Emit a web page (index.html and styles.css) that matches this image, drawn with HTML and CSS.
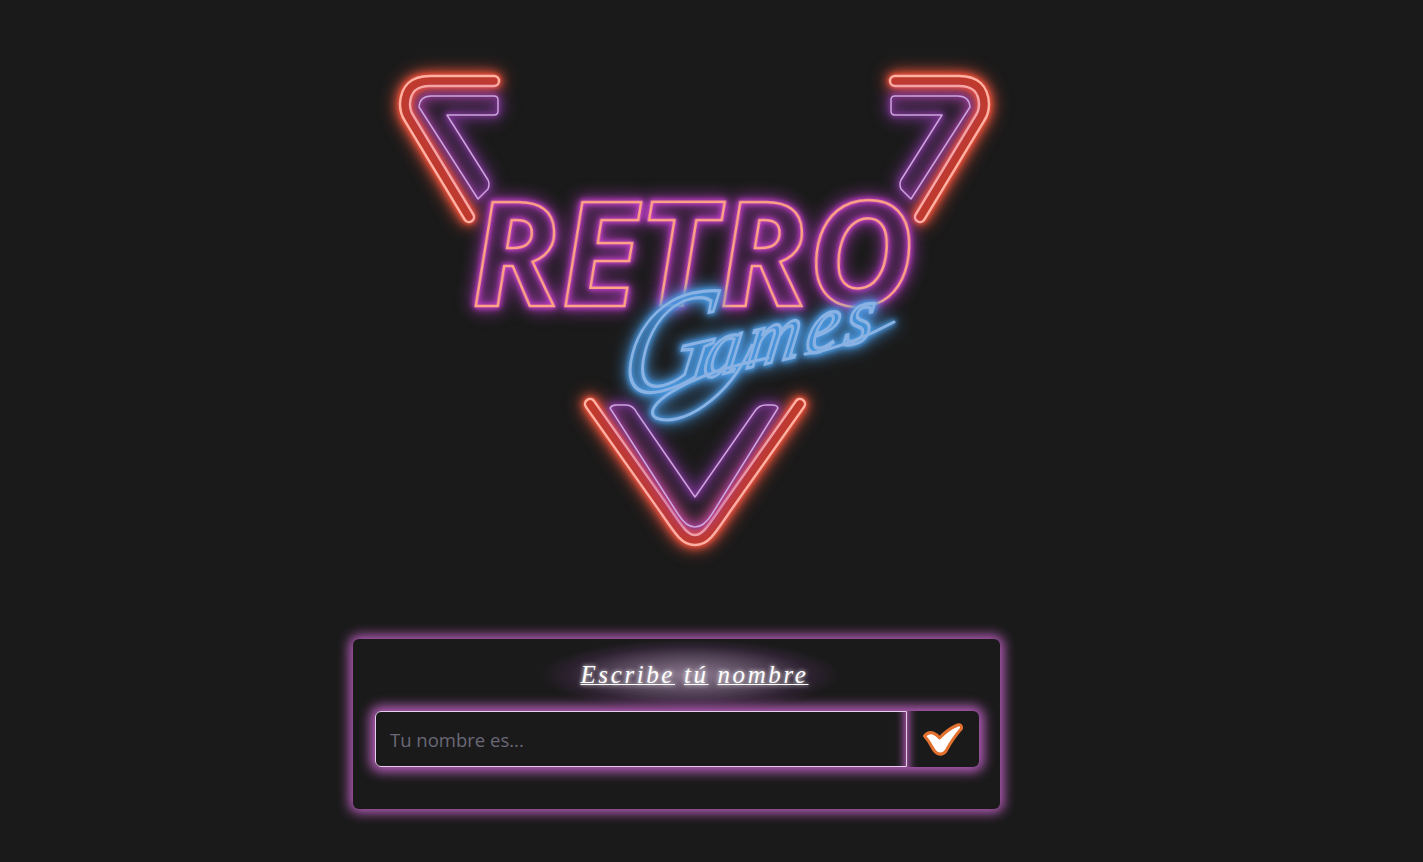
FILE: index.html
```html
<!DOCTYPE html>
<html lang="es">
<head>
    <meta charset="UTF-8">
    <title>Retro Games</title>
    <link rel="stylesheet" href="styles.css">
</head>
<body>

<div class="container">
    <!-- logo neon -->
    <svg class="logo" viewBox="365 55 660 530" role="img" aria-label="Retro Games">
        <defs>
            <path id="tube-corner" d="M494 81 H430 Q406 81 405 104 Q405 112 409 118 L469 217"/>
            <path id="tube-v" d="M590 404 L665 510 C680 532 685 540 695 540 C705 540 710 532 725 510 L800 404"/>
            <path id="shape-corner" d="M494 96 H431 Q420 96 419 107 L478 199 L488 189 Q490 184 488 180 L447 115 H494 Q498 115 498 111 V100 Q498 96 494 96 Z"/>
            <path id="shape-v" d="M610 408 Q612 405 616 405 H626 Q633 405 637 413 L695 497 L755 411 Q759 405 766 405 H772 Q777 405 778 408 L712 514 Q704 527 695 527 Q686 527 678 514 Z"/>
        </defs>

        <g class="glow-red">
            <use href="#tube-corner" class="tube-edge"/>
            <use href="#tube-corner" class="tube-core"/>
            <use href="#tube-v" class="tube-edge"/>
            <use href="#tube-v" class="tube-core"/>
            <g transform="translate(1389 0) scale(-1 1)">
                <use href="#tube-corner" class="tube-edge"/>
                <use href="#tube-corner" class="tube-core"/>
            </g>
        </g>
        <g class="glow-purple">
            <use href="#shape-corner" class="shape"/>
            <use href="#shape-v" class="shape"/>
            <use href="#shape-corner" class="shape" transform="translate(1389 0) scale(-1 1)"/>
        </g>

        <text class="retro" transform="translate(472 306) skewX(3)" textLength="445" lengthAdjust="spacingAndGlyphs">RETRO</text>

        <g class="games">
            <text transform="translate(618 400) rotate(-13) skewX(-22)"><tspan class="games-big">G</tspan><tspan dx="-10" dy="-2" class="games-small">ames</tspan></text>
            <!-- adornos del rotulo -->
            <path class="swash" d="M752 345 C728 400 680 428 656 418 C640 408 680 376 768 358"/>
            <path class="swash" d="M894 322 C870 335 835 350 805 354"/>
        </g>
    </svg>

    <!-- formulario -->
    <form class="name-form">
        <h2 class="name-title"><span>Escribe</span> <span>tú</span> <span>nombre</span></h2>
        <div class="input-group">
            <input type="text" class="name-input" placeholder="Tu nombre es...">
            <button type="button" class="name-button" aria-label="Aceptar">
                <svg class="check" viewBox="0 0 42 33">
                    <path d="M2.500 13 Q6 8.500 11 10 Q15 11.500 17.500 15 Q26 6 35.500 2 Q40 1 39.500 5.500 Q31 15 24 28 Q20.500 32.500 15.500 30.500 Q12.500 29 10 24 Q7 18 2.500 13 Z"/>
                </svg>
            </button>
        </div>
    </form>
</div>

</body>
</html>
```

FILE: styles.css
```css
body {
    font-family: "Open Sans", "Noto Sans", sans-serif;
    background-color: #1a1a1a;
    margin: 0;
    padding: 0;
}

.container {
    display: flex;
    flex-direction: column;
    align-items: flex-start;
    height: 862px;
    box-sizing: border-box;
    padding: 55px 0 0 353px;
}

/* logo */
.logo {
    display: block;
    width: 660px;
    height: 530px;
    margin: 0 0 54px 12px;
}

.tube-edge,
.tube-core {
    fill: none;
    stroke-linecap: round;
    stroke-linejoin: round;
}

.tube-edge {
    stroke: #ffb3a3;
    stroke-width: 12.500px;
}

.tube-core {
    stroke: #c03a2b;
    stroke-width: 7.500px;
}

.glow-red {
    filter: drop-shadow(0 0 2px #f0503a) drop-shadow(0 0 4px #e8503a) drop-shadow(0 0 8px #d8503a);
}

.shape {
    fill: none;
    stroke: #cda6dc;
    stroke-width: 1.500px;
    stroke-linejoin: round;
}

.glow-purple {
    filter: drop-shadow(0 0 2px #a040c0) drop-shadow(0 0 4px #a040c0) drop-shadow(0 0 8px #a040c0);
}

.retro {
    font-family: "Open Sans", sans-serif;
    font-style: italic;
    font-weight: 700;
    font-size: 145px;
    fill: none;
    stroke: #ffa585;
    stroke-width: 2.500px;
    stroke-linejoin: miter;
    filter: drop-shadow(0 0 2px #d040d8) drop-shadow(0 0 3px #d040d8) drop-shadow(0 0 8px #c040d0);
}

.games {
    filter: drop-shadow(0 0 2px #4a98e0) drop-shadow(0 0 3px #4a98e0) drop-shadow(0 0 8px #4a98e0);
}

.games text {
    font-family: "Liberation Serif", serif;
    font-style: italic;
    fill: none;
    stroke: #8ab2e2;
    stroke-width: 3px;
}

.games-big {
    font-size: 132px;
}

.games-small {
    font-size: 76px;
    letter-spacing: 6px;
}

.swash {
    fill: none;
    stroke: #8ab2e2;
    stroke-width: 3px;
    stroke-linecap: round;
}

/* formulario */
.name-form {
    width: 647px;
    height: 170px;
    box-sizing: border-box;
    padding: 22px 22px;
    border-radius: 6px;
    background-color: #1a1a1a;
    box-shadow: 0 0 12px 4px #b65cba;
    isolation: isolate;
}

.name-title {
    position: relative;
    margin: 0 0 23px 0;
    padding-left: 36px;
    height: 27px;
    line-height: 27px;
    text-align: center;
    font-family: "Liberation Serif", serif;
    font-style: italic;
    font-size: 25px;
    font-weight: 400;
    letter-spacing: 2.600px;
    color: #fff;
    text-shadow: 0 0 4px #fff;
}

/* halo detras del titulo */
.name-title::before {
    content: "";
    position: absolute;
    z-index: -1;
    left: 165px;
    top: -22px;
    width: 300px;
    height: 72px;
    background: radial-gradient(ellipse closest-side, rgba(190, 165, 195, 0.7), rgba(160, 120, 170, 0.4) 55%, rgba(130, 70, 150, 0.18) 80%, transparent);
}

.name-title span {
    text-decoration: underline;
    text-decoration-thickness: 1px;
    text-underline-offset: 1px;
    text-decoration-skip-ink: none;
}

.input-group {
    display: flex;
    width: 604px;
    height: 56px;
    border-radius: 6px;
    box-shadow: 0 0 12px 5px #b65cba;
}

.name-input {
    flex: 1;
    min-width: 0;
    box-sizing: border-box;
    padding: 0 14px;
    border: 1px solid #e6cfea;
    border-radius: 6px 0 0 6px;
    background-color: transparent;
    font-family: "Open Sans", sans-serif;
    font-size: 18.500px;
    color: #fff;
    box-shadow: inset -10px 0 8px -8px #b65cba;
}

.name-input::placeholder {
    color: #6a6878;
    opacity: 1;
}

.name-button {
    display: flex;
    align-items: center;
    justify-content: center;
    width: 72px;
    padding: 0;
    border: none;
    border-radius: 0 6px 6px 0;
    background-color: transparent;
    box-shadow: inset 10px 0 8px -8px #b65cba;
}

.check {
    width: 42px;
    height: 33px;
}

.check path {
    fill: #fff;
    stroke: #e2702e;
    stroke-width: 3px;
    stroke-linejoin: round;
}
```
